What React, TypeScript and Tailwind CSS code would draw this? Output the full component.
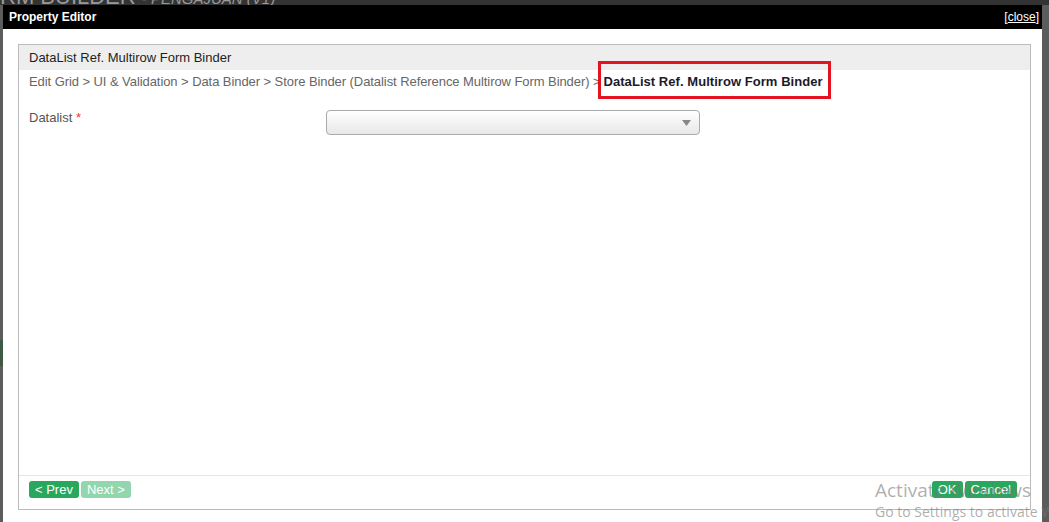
import React from "react";

export default function App() {
  return (
    <div className="relative h-[522px] w-[1049px] overflow-hidden bg-[#5c5c5c] font-['Liberation_Sans',Arial,sans-serif]">
      {/* backdrop page */}
      <div className="absolute left-0 top-0 h-[5px] w-full bg-[#333]" />
      <div className="absolute left-0 top-[-14px] text-[22px] leading-none text-[#9a9a9a] whitespace-nowrap">
        RM BUILDER <span className="text-[15px] italic">- PENGAJUAN (V1)</span>
      </div>
      <div className="absolute left-0 top-[340px] h-[26px] w-[3px] bg-[#3f5a44]" />

      {/* dialog */}
      <div className="absolute left-[3px] top-[5px] flex h-[517px] w-[1039px] flex-col bg-white">
        <div className="flex h-[24px] items-center justify-between bg-black pl-[6px] pr-[3px]">
          <span className="text-[12px] font-bold text-white">Property Editor</span>
          <span className="text-[12px] text-white">
            [<span className="underline">close</span>]
          </span>
        </div>
        <div className="flex-1 pl-[15px] pr-[11px] pb-[12px] pt-[15px]">
          <div className="flex h-full flex-col border border-[#bbb]">
            <div className="flex h-[25px] items-center bg-[#eeeeee] pl-[10px] text-[13px] text-[#1e1e1e]">
              DataList Ref. Multirow Form Binder
            </div>
            <div className="flex h-[23px] items-center pl-[10px] text-[13px] text-[#666] whitespace-nowrap">
              <span className="tracking-[-0.07px]">Edit Grid &gt; UI &amp; Validation &gt; Data Binder &gt; Store Binder (Datalist Reference Multirow Form Binder) &gt;</span>
              <span className="relative ml-[3px] font-bold tracking-[0.05px] text-[#1a1a2e]">
                DataList Ref. Multirow Form Binder
                <span className="absolute left-[-6px] right-[-8px] top-[-11px] bottom-[-8px] border-[3px] border-[#e3141f]" />
              </span>
            </div>
            <div className="flex items-start pl-[10px] pt-[15px]">
              <div className="w-[297px] text-[13px] text-[#555]">
                Datalist <span className="text-[#e33]">*</span>
              </div>
              <div className="relative mt-[2px] h-[25px] w-[374px] rounded-[4px] border border-[#aaa] bg-gradient-to-b from-white via-[#f3f3f3] to-[#e8e8e8]">
                <svg className="absolute right-[8px] top-[9px]" width="9" height="6" viewBox="0 0 9 6">
                  <path d="M0 0 L9 0 L4.5 6 Z" fill="#888" />
                </svg>
              </div>
            </div>
            <div className="flex-1" />
            <div className="flex h-[34px] items-start justify-between border-t border-[#e5e5e5] px-[10px] pt-[5px]">
              <div className="flex gap-[2px]">
                <span className="rounded-[3px] bg-[#27a85d] px-[6px] text-[13px] leading-[17px] text-white">&lt; Prev</span>
                <span className="rounded-[3px] bg-[#91d6ad] px-[6px] text-[13px] leading-[17px] text-white">Next &gt;</span>
              </div>
              <div className="flex gap-[2px] pr-[3px]">
                <span className="rounded-[3px] bg-[#27a85d] px-[6px] text-[13px] leading-[17px] text-white">OK</span>
                <span className="rounded-[3px] bg-[#27a85d] px-[6px] text-[13px] leading-[17px] text-white">Cancel</span>
              </div>
            </div>
          </div>
        </div>
      </div>

      {/* Windows watermark */}
      <div className="pointer-events-none absolute left-[875px] top-[478px] whitespace-nowrap font-['Open_Sans',sans-serif] text-[rgba(120,120,120,0.6)]">
        <div className="text-[19px] leading-[24px]">Activate Windows</div>
        <div className="text-[14px] leading-[20px]">Go to Settings to activate Windows.</div>
      </div>
    </div>
  );
}
